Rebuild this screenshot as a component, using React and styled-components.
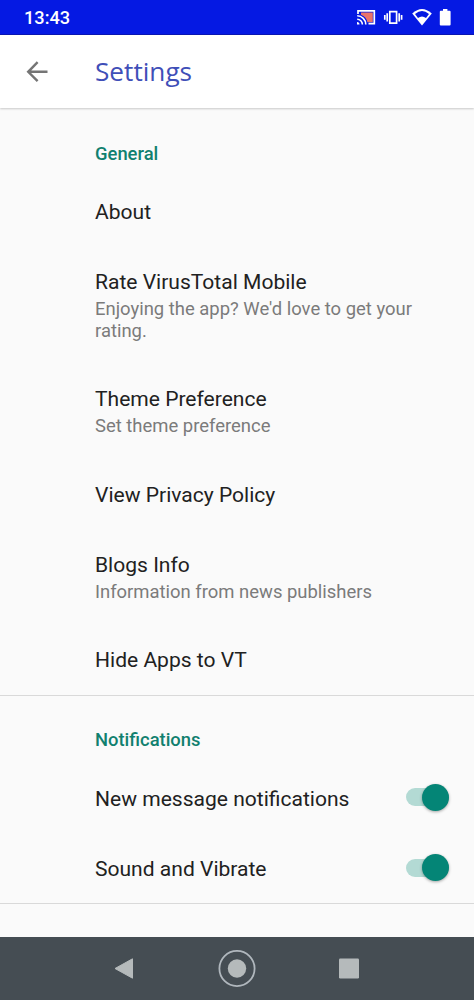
import styled, { createGlobalStyle } from "styled-components";

const GlobalStyle = createGlobalStyle`
    * {
        box-sizing: border-box;
    }

    body {
        margin: 0;
        background-color: #fafafa;
        font-family: Roboto, sans-serif;
    }
`;

const Screen = styled.div`
    display: flex;
    flex-direction: column;
    width: 474px;
    height: 1000px;
    overflow: hidden;
    background-color: #fafafa;
`;

const StatusBar = styled.header`
    display: flex;
    align-items: center;
    justify-content: space-between;
    flex: none;
    height: 35px;
    padding: 0 22px 0 24px;
    background-color: #0519e3;
    border-bottom: 1px solid #0a16b4;
`;

const Clock = styled.span`
    padding-top: 2px;
    color: #fff;
    font-size: 18.2px;
    font-weight: 500;
    line-height: 22px;
`;

const StatusIcons = styled.svg`
    display: block;
    width: 96px;
    height: 34px;
`;

const AppBar = styled.div`
    display: flex;
    align-items: center;
    flex: none;
    height: 73px;
    padding-left: 26px;
    background-color: #fff;
    box-shadow: 0 1px 2px rgba(0, 0, 0, 0.2);
    z-index: 1;
`;

const BackButton = styled.button`
    display: flex;
    width: 69px;
    padding: 0;
    border: none;
    background: none;
`;

const AppBarTitle = styled.h1`
    margin: 0;
    padding-bottom: 1px;
    color: #3f4fb8;
    font-family: "Open Sans", sans-serif;
    font-size: 26.2px;
    font-weight: 400;
    line-height: 36px;
`;

const Content = styled.main`
    flex: 1;
    min-height: 0;
    overflow: hidden;
`;

const Section = styled.section`
    border-bottom: 1px solid #d9d9d9;

    & > :last-child {
        padding-bottom: 21.4px;
    }
`;

const SectionTitle = styled.h2`
    height: ${({ $first }) => ($first ? "69px" : "68.2px")};
    margin: 0;
    padding: ${({ $first }) => ($first ? "35px" : "33px")} 0 0 95px;
    color: #11806f;
    font-size: 18.4px;
    font-weight: 500;
    line-height: 22px;
`;

const Row = styled.div`
    display: flex;
    align-items: center;
    justify-content: space-between;
    padding: 22.7px 25px 22.7px 95px;
`;

const RowTitle = styled.div`
    color: #212121;
    font-size: 21.05px;
    line-height: 24.8px;
    white-space: nowrap;
`;

const Summary = styled.div`
    max-width: 340px;
    margin-bottom: -0.7px;
    padding-top: 4.4px;
    color: #7b7b7b;
    font-size: 18.45px;
    line-height: 21.7px;
`;

const Switch = styled.span`
    display: flex;
    align-items: center;
    justify-content: flex-end;
    width: 43px;
    height: 18px;
    margin-top: -3px;
    border-radius: 9px;
    background-color: #b3dad4;
`;

const Thumb = styled.span`
    flex: none;
    width: 27px;
    height: 27px;
    border-radius: 50%;
    background-color: #048576;
    box-shadow: 0 1px 3px rgba(0, 0, 0, 0.35);
`;

const NavBar = styled.nav`
    display: flex;
    flex: none;
    height: 63px;
    background-color: #454d53;
`;

const sections = [
    {
        title: "General",
        items: [
            { title: "About" },
            {
                title: "Rate VirusTotal Mobile",
                summary: "Enjoying the app? We'd love to get your rating.",
            },
            { title: "Theme Preference", summary: "Set theme preference" },
            { title: "View Privacy Policy" },
            {
                title: "Blogs Info",
                summary: "Information from news publishers",
            },
            { title: "Hide Apps to VT" },
        ],
    },
    {
        title: "Notifications",
        items: [
            { title: "New message notifications", toggle: true },
            { title: "Sound and Vibrate", toggle: true },
        ],
    },
];

const SettingRow = ({ item }) => {
    return (
        <Row>
            <div>
                <RowTitle>{item.title}</RowTitle>
                {item.summary && <Summary>{item.summary}</Summary>}
            </div>
            {item.toggle && (
                <Switch role="switch" aria-checked="true">
                    <Thumb />
                </Switch>
            )}
        </Row>
    );
};

const App = () => {
    return (
        <>
            <GlobalStyle />
            <Screen>
                <StatusBar>
                    <Clock>13:43</Clock>
                    <StatusIcons viewBox="356 0 96 34">
                        {/* cast */}
                        <path d="M361 12.5h11.8v9.8h-5.4a10 10 0 0 0-6.4-7.5z" fill="#ea7468" />
                        <path
                            d="M358 14v-3.2h16.3v12.9H368.5"
                            fill="none"
                            stroke="#fff"
                            strokeWidth="1.7"
                        />
                        <path
                            d="M357.2 15.8a8.6 8.6 0 0 1 8.6 8.6M357.2 19.2a5.2 5.2 0 0 1 5.2 5.2"
                            fill="none"
                            stroke="#fff"
                            strokeWidth="1.6"
                        />
                        <path d="M357 22v2.5h2.5a2.5 2.5 0 0 0-2.5-2.5z" fill="#fff" />
                        {/* vibrate */}
                        <path
                            d="M389.8 11.7h6.8v11.4h-6.8zM387.2 13.2v8.4M399.2 13.2v8.4M384.8 15v4.8M401.6 15v4.8"
                            fill="none"
                            stroke="#fff"
                            strokeWidth="1.7"
                        />
                        {/* wifi */}
                        <path
                            d="M412.2 13.4q9.8-9 19.6 0L422 25.6z"
                            fill="#fff"
                        />
                        <path
                            d="M415 13.9q7-5.8 14 0l-3 4q-4-3-8 0z"
                            fill="#0519e3"
                        />
                        {/* battery */}
                        <path
                            d="M443 9h4.4v1.8h2.2q1 0 1 1v12.7q0 1-1 1h-8.8q-1 0-1-1V11.8q0-1 1-1h2.2z"
                            fill="#fff"
                        />
                    </StatusIcons>
                </StatusBar>
                <AppBar>
                    <BackButton aria-label="Back">
                        <svg width="22" height="22" viewBox="0 0 22 22">
                            <path
                                d="M21.5 10.8H2.5M11.6 1.2L2.2 10.8l9.4 9.4"
                                fill="none"
                                stroke="#757575"
                                strokeWidth="2.4"
                            />
                        </svg>
                    </BackButton>
                    <AppBarTitle>Settings</AppBarTitle>
                </AppBar>
                <Content>
                    {sections.map((section, index) => (
                        <Section key={section.title}>
                            <SectionTitle $first={index === 0}>
                                {section.title}
                            </SectionTitle>
                            {section.items.map((item) => (
                                <SettingRow item={item} key={item.title} />
                            ))}
                        </Section>
                    ))}
                </Content>
                <NavBar>
                    <svg width="474" height="63" viewBox="0 937 474 63">
                        <path
                            d="M115 968.5L132.5 958.8V978.2z"
                            fill="#b5babb"
                            stroke="#b5babb"
                            strokeLinejoin="round"
                        />
                        <circle cx="237" cy="968.5" r="9.2" fill="#b5babb" />
                        <circle
                            cx="237"
                            cy="968.5"
                            r="17.6"
                            fill="none"
                            stroke="#b0b7bd"
                            strokeWidth="1.8"
                        />
                        <rect x="339" y="958.5" width="20" height="20" rx="1.2" fill="#b5babb" />
                    </svg>
                </NavBar>
            </Screen>
        </>
    );
};

export default App;
